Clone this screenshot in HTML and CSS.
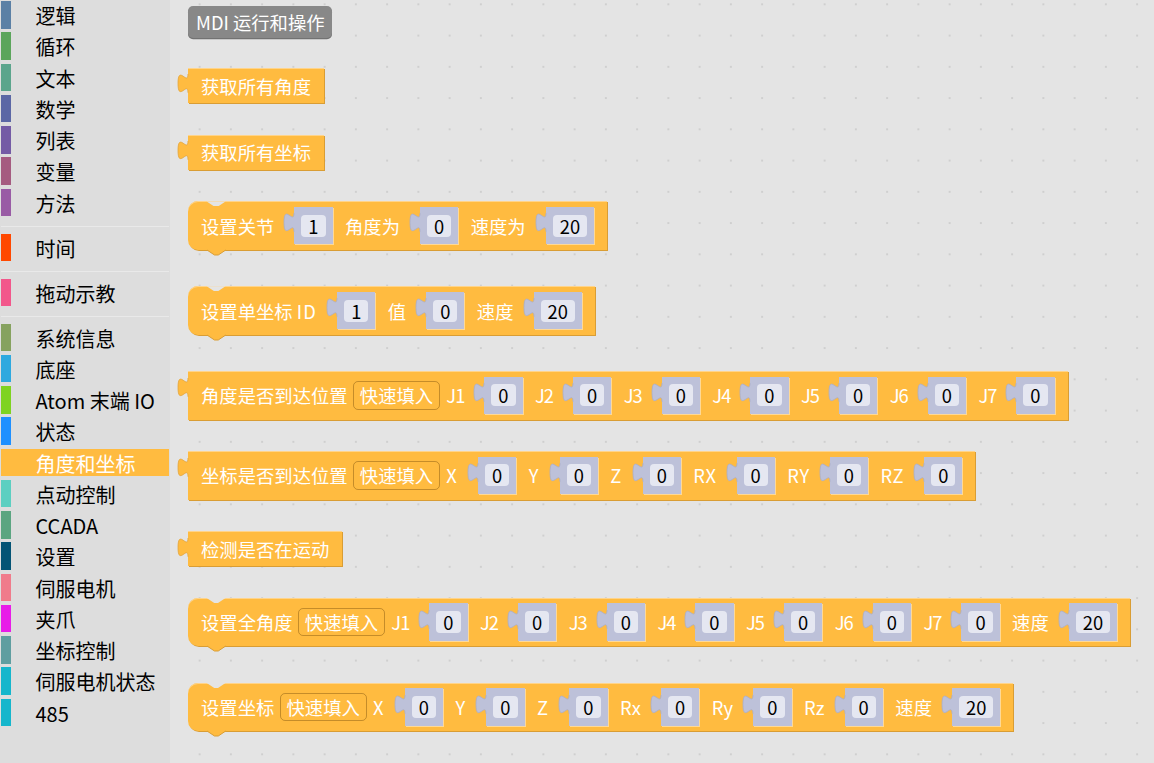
FILE: index.html
```html
<!DOCTYPE html>
<html lang="zh-CN">
<head>
<meta charset="utf-8">
<title>MDI 运行和操作</title>
<link rel="stylesheet" href="styles.css">
</head>
<body>
<svg class="defs" aria-hidden="true"><defs><path id="tp" d="M10 0C10 12.5 0 -10 0 9.375C0 28.75 10 6.25 10 18.75"/></defs></svg>
<div class="app">
  <nav class="toolbox">
    <div class="cat"><span class="bar c-logic"></span><span class="name">逻辑</span></div>
    <div class="cat"><span class="bar c-loop"></span><span class="name">循环</span></div>
    <div class="cat"><span class="bar c-text"></span><span class="name">文本</span></div>
    <div class="cat"><span class="bar c-math"></span><span class="name">数学</span></div>
    <div class="cat"><span class="bar c-list"></span><span class="name">列表</span></div>
    <div class="cat"><span class="bar c-var"></span><span class="name">变量</span></div>
    <div class="cat"><span class="bar c-proc"></span><span class="name">方法</span></div>
    <div class="sep"></div>
    <div class="cat"><span class="bar c-time"></span><span class="name">时间</span></div>
    <div class="sep"></div>
    <div class="cat"><span class="bar c-drag"></span><span class="name">拖动示教</span></div>
    <div class="sep"></div>
    <div class="cat"><span class="bar c-sys"></span><span class="name">系统信息</span></div>
    <div class="cat"><span class="bar c-base"></span><span class="name">底座</span></div>
    <div class="cat"><span class="bar c-atom"></span><span class="name">Atom 末端 IO</span></div>
    <div class="cat"><span class="bar c-state"></span><span class="name">状态</span></div>
    <div class="cat sel"><span class="bar c-angle"></span><span class="name">角度和坐标</span></div>
    <div class="cat"><span class="bar c-jog"></span><span class="name">点动控制</span></div>
    <div class="cat"><span class="bar c-ccada"></span><span class="name">CCADA</span></div>
    <div class="cat"><span class="bar c-set"></span><span class="name">设置</span></div>
    <div class="cat"><span class="bar c-servo"></span><span class="name">伺服电机</span></div>
    <div class="cat"><span class="bar c-grip"></span><span class="name">夹爪</span></div>
    <div class="cat"><span class="bar c-coord"></span><span class="name">坐标控制</span></div>
    <div class="cat"><span class="bar c-sstate"></span><span class="name">伺服电机状态</span></div>
    <div class="cat"><span class="bar c-485"></span><span class="name">485</span></div>
  </nav>

  <main class="ws">
    <div class="label">MDI 运行和操作</div>

    <div class="blk simple first">
      <svg class="tab" viewBox="0 0 10 18.75"><use href="#tp"/></svg>
      <span class="t">获取所有角度</span>
    </div>

    <div class="blk simple">
      <svg class="tab" viewBox="0 0 10 18.75"><use href="#tp"/></svg>
      <span class="t">获取所有坐标</span>
    </div>

    <div class="blk inputs stmt">
      <svg class="bump" viewBox="0 0 18.75 6"><path d="M0 0L7.5 5H11.25L18.75 0"/></svg>
      <span class="t">设置关节</span>
      <span class="slot"><svg class="tab" viewBox="0 0 10 18.75"><use href="#tp"/></svg><span class="fld">1</span></span>
      <span class="t">角度为</span>
      <span class="slot"><svg class="tab" viewBox="0 0 10 18.75"><use href="#tp"/></svg><span class="fld">0</span></span>
      <span class="t">速度为</span>
      <span class="slot"><svg class="tab" viewBox="0 0 10 18.75"><use href="#tp"/></svg><span class="fld">20</span></span>
    </div>

    <div class="blk inputs stmt">
      <svg class="bump" viewBox="0 0 18.75 6"><path d="M0 0L7.5 5H11.25L18.75 0"/></svg>
      <span class="t">设置单坐标 <span class="lid">ID</span></span>
      <span class="slot"><svg class="tab" viewBox="0 0 10 18.75"><use href="#tp"/></svg><span class="fld">1</span></span>
      <span class="t">值</span>
      <span class="slot"><svg class="tab" viewBox="0 0 10 18.75"><use href="#tp"/></svg><span class="fld">0</span></span>
      <span class="t">速度</span>
      <span class="slot"><svg class="tab" viewBox="0 0 10 18.75"><use href="#tp"/></svg><span class="fld">20</span></span>
    </div>

    <div class="blk inputs">
      <svg class="tab" viewBox="0 0 10 18.75"><use href="#tp"/></svg>
      <span class="t">角度是否到达位置</span>
      <span class="dd">快速填入</span>
      <span class="t lj">J1</span>
      <span class="slot"><svg class="tab" viewBox="0 0 10 18.75"><use href="#tp"/></svg><span class="fld">0</span></span>
      <span class="t lj">J2</span>
      <span class="slot"><svg class="tab" viewBox="0 0 10 18.75"><use href="#tp"/></svg><span class="fld">0</span></span>
      <span class="t lj">J3</span>
      <span class="slot"><svg class="tab" viewBox="0 0 10 18.75"><use href="#tp"/></svg><span class="fld">0</span></span>
      <span class="t lj">J4</span>
      <span class="slot"><svg class="tab" viewBox="0 0 10 18.75"><use href="#tp"/></svg><span class="fld">0</span></span>
      <span class="t lj">J5</span>
      <span class="slot"><svg class="tab" viewBox="0 0 10 18.75"><use href="#tp"/></svg><span class="fld">0</span></span>
      <span class="t lj">J6</span>
      <span class="slot"><svg class="tab" viewBox="0 0 10 18.75"><use href="#tp"/></svg><span class="fld">0</span></span>
      <span class="t lj">J7</span>
      <span class="slot"><svg class="tab" viewBox="0 0 10 18.75"><use href="#tp"/></svg><span class="fld">0</span></span>
    </div>

    <div class="blk inputs">
      <svg class="tab" viewBox="0 0 10 18.75"><use href="#tp"/></svg>
      <span class="t">坐标是否到达位置</span>
      <span class="dd">快速填入</span>
      <span class="t lx">X</span>
      <span class="slot"><svg class="tab" viewBox="0 0 10 18.75"><use href="#tp"/></svg><span class="fld">0</span></span>
      <span class="t lx">Y</span>
      <span class="slot"><svg class="tab" viewBox="0 0 10 18.75"><use href="#tp"/></svg><span class="fld">0</span></span>
      <span class="t lx">Z</span>
      <span class="slot"><svg class="tab" viewBox="0 0 10 18.75"><use href="#tp"/></svg><span class="fld">0</span></span>
      <span class="t lr">RX</span>
      <span class="slot"><svg class="tab" viewBox="0 0 10 18.75"><use href="#tp"/></svg><span class="fld">0</span></span>
      <span class="t lr">RY</span>
      <span class="slot"><svg class="tab" viewBox="0 0 10 18.75"><use href="#tp"/></svg><span class="fld">0</span></span>
      <span class="t lr">RZ</span>
      <span class="slot"><svg class="tab" viewBox="0 0 10 18.75"><use href="#tp"/></svg><span class="fld">0</span></span>
    </div>

    <div class="blk simple">
      <svg class="tab" viewBox="0 0 10 18.75"><use href="#tp"/></svg>
      <span class="t">检测是否在运动</span>
    </div>

    <div class="blk inputs stmt">
      <svg class="bump" viewBox="0 0 18.75 6"><path d="M0 0L7.5 5H11.25L18.75 0"/></svg>
      <span class="t">设置全角度</span>
      <span class="dd">快速填入</span>
      <span class="t lj">J1</span>
      <span class="slot"><svg class="tab" viewBox="0 0 10 18.75"><use href="#tp"/></svg><span class="fld">0</span></span>
      <span class="t lj">J2</span>
      <span class="slot"><svg class="tab" viewBox="0 0 10 18.75"><use href="#tp"/></svg><span class="fld">0</span></span>
      <span class="t lj">J3</span>
      <span class="slot"><svg class="tab" viewBox="0 0 10 18.75"><use href="#tp"/></svg><span class="fld">0</span></span>
      <span class="t lj">J4</span>
      <span class="slot"><svg class="tab" viewBox="0 0 10 18.75"><use href="#tp"/></svg><span class="fld">0</span></span>
      <span class="t lj">J5</span>
      <span class="slot"><svg class="tab" viewBox="0 0 10 18.75"><use href="#tp"/></svg><span class="fld">0</span></span>
      <span class="t lj">J6</span>
      <span class="slot"><svg class="tab" viewBox="0 0 10 18.75"><use href="#tp"/></svg><span class="fld">0</span></span>
      <span class="t lj">J7</span>
      <span class="slot"><svg class="tab" viewBox="0 0 10 18.75"><use href="#tp"/></svg><span class="fld">0</span></span>
      <span class="t">速度</span>
      <span class="slot"><svg class="tab" viewBox="0 0 10 18.75"><use href="#tp"/></svg><span class="fld">20</span></span>
    </div>

    <div class="blk inputs stmt">
      <svg class="bump" viewBox="0 0 18.75 6"><path d="M0 0L7.5 5H11.25L18.75 0"/></svg>
      <span class="t">设置坐标</span>
      <span class="dd">快速填入</span>
      <span class="t lx">X</span>
      <span class="slot"><svg class="tab" viewBox="0 0 10 18.75"><use href="#tp"/></svg><span class="fld">0</span></span>
      <span class="t lx">Y</span>
      <span class="slot"><svg class="tab" viewBox="0 0 10 18.75"><use href="#tp"/></svg><span class="fld">0</span></span>
      <span class="t lx">Z</span>
      <span class="slot"><svg class="tab" viewBox="0 0 10 18.75"><use href="#tp"/></svg><span class="fld">0</span></span>
      <span class="t lrl">Rx</span>
      <span class="slot"><svg class="tab" viewBox="0 0 10 18.75"><use href="#tp"/></svg><span class="fld">0</span></span>
      <span class="t lrl">Ry</span>
      <span class="slot"><svg class="tab" viewBox="0 0 10 18.75"><use href="#tp"/></svg><span class="fld">0</span></span>
      <span class="t lrl">Rz</span>
      <span class="slot"><svg class="tab" viewBox="0 0 10 18.75"><use href="#tp"/></svg><span class="fld">0</span></span>
      <span class="t">速度</span>
      <span class="slot"><svg class="tab" viewBox="0 0 10 18.75"><use href="#tp"/></svg><span class="fld">20</span></span>
    </div>
  </main>
</div>
</body>
</html>
```

FILE: styles.css
```css
* { box-sizing: border-box; }

html, body {
  margin: 0;
  height: 100%;
}

body {
  font-family: "Noto Sans CJK SC", "Noto Sans", sans-serif;
  background: #e4e4e4;
  overflow: hidden;
}

.defs {
  position: absolute;
  width: 0;
  height: 0;
  overflow: hidden;
}

.app {
  display: flex;
  height: 763px;
}

/* ---------- toolbox ---------- */
.toolbox {
  width: 170px;
  flex: none;
  display: flex;
  flex-direction: column;
  background: #dddddd;
  padding: 1px 1px 0 1px;
}

.cat {
  display: flex;
  align-items: flex-start;
  height: 27.5px;
  margin-bottom: 3.75px;
  font-size: 20px;
  line-height: 27.5px;
  color: #000;
  white-space: nowrap;
  flex: none;
}

.cat .bar {
  width: 10px;
  height: 100%;
  flex: none;
  margin-right: 24.5px;
}

.cat .name {
  padding-top: 1.2px;
}

.cat.sel {
  background: #ffbb40;
  color: #fff;
}

.sep {
  flex: none;
  height: 1.25px;
  background: #e9e9e9;
  margin: 6.25px 0;
}

.c-logic { background: #5b80a5; }
.c-loop { background: #5ba55b; }
.c-text { background: #5ba58c; }
.c-math { background: #5b67a5; }
.c-list { background: #745ba5; }
.c-var { background: #a55b80; }
.c-proc { background: #995ba5; }
.c-time { background: #ff4800; }
.c-drag { background: #f2578b; }
.c-sys { background: #86a25f; }
.c-base { background: #2ea9df; }
.c-atom { background: #7ed321; }
.c-state { background: #1e90ff; }
.c-angle { background: #ffbb40; }
.c-jog { background: #5ccfc1; }
.c-ccada { background: #5ba581; }
.c-set { background: #045475; }
.c-servo { background: #f07b8b; }
.c-grip { background: #e81ce8; }
.c-coord { background: #5f9ea0; }
.c-sstate { background: #15b6cc; }
.c-485 { background: #15b6cc; }

/* ---------- workspace ---------- */
.ws {
  flex: 1;
  position: relative;
  display: flex;
  flex-direction: column;
  align-items: flex-start;
  padding: 6px 0 0 18px;
  background-color: #e4e4e4;
  background-image: radial-gradient(circle, #cfcfcf 0.9px, rgba(228,228,228,0) 1.3px);
  background-size: 31.25px 31.25px;
  background-position: 14px -11.3px;
}

.label {
  height: 32px;
  padding: 0 7px 0 8px;
  background: #888888;
  border-radius: 5px;
  color: #fff;
  font-size: 18.33px;
  line-height: 32px;
  box-shadow: 0 1.3px 0 #727272;
  white-space: nowrap;
}

.blk {
  position: relative;
  display: flex;
  align-items: center;
  flex: none;
  background: #ffbb40;
  color: #fff;
  font-size: 18.33px;
  line-height: 22px;
  padding: 0 13px;
  margin-top: 31.7px;
  white-space: nowrap;
  box-shadow: 1px 1px 0 #d99d34, inset 0 1px 0 #ffd48a;
}

.blk.first { margin-top: 30px; }
.blk.simple { height: 35px; }
.blk.inputs { height: 48.3px; }

.blk.stmt {
  border-radius: 10px 0 0 10px;
  margin-bottom: 5px;
}

.blk.stmt::before {
  content: "";
  position: absolute;
  left: 18.75px;
  top: 0;
  width: 18.75px;
  height: 5px;
  background: #e4e4e4;
  clip-path: polygon(0 0, 100% 0, 60% 100%, 40% 100%);
}

.bump {
  position: absolute;
  left: 18.75px;
  top: 100%;
  width: 18.75px;
  height: 6px;
  overflow: visible;
  fill: #ffbb40;
  stroke: #d99d34;
  stroke-width: 1;
}

.tab {
  position: absolute;
  left: -10px;
  top: 6.25px;
  width: 10px;
  height: 18.75px;
  overflow: visible;
  fill: #ffbb40;
  stroke: #e2a53c;
  stroke-width: 0.8;
}

.t { flex: none; }

/* per-label width tuning of latin captions */
.lj { letter-spacing: -1px; }
.lx { letter-spacing: 1.2px; }
.lr { letter-spacing: 0.6px; }
.lrl { letter-spacing: 0.2px; }
.lid { letter-spacing: 1.2px; }

.slot {
  position: relative;
  flex: none;
  display: flex;
  align-items: center;
  justify-content: center;
  height: 37.5px;
  margin-left: 20px;
  padding: 0 7px;
  background: #bdc1d9;
  box-shadow: 1px 1px 0 #ffd995;
}

.slot .tab {
  fill: #bdc1d9;
  stroke: #a9adc8;
}

.slot + .t { margin-left: 12.5px; }

.fld {
  min-width: 24px;
  height: 22px;
  padding: 0 7px;
  border-radius: 4px;
  background: #e5e7f1;
  color: #000;
  text-align: center;
  line-height: 22px;
}

.dd {
  flex: none;
  height: 28.4px;
  margin-left: 5.5px;
  padding: 0 5.7px;
  border: 1px solid rgba(90, 55, 0, 0.35);
  border-radius: 5px;
  line-height: 26px;
}

.dd + .t { margin-left: 6.5px; }
```
